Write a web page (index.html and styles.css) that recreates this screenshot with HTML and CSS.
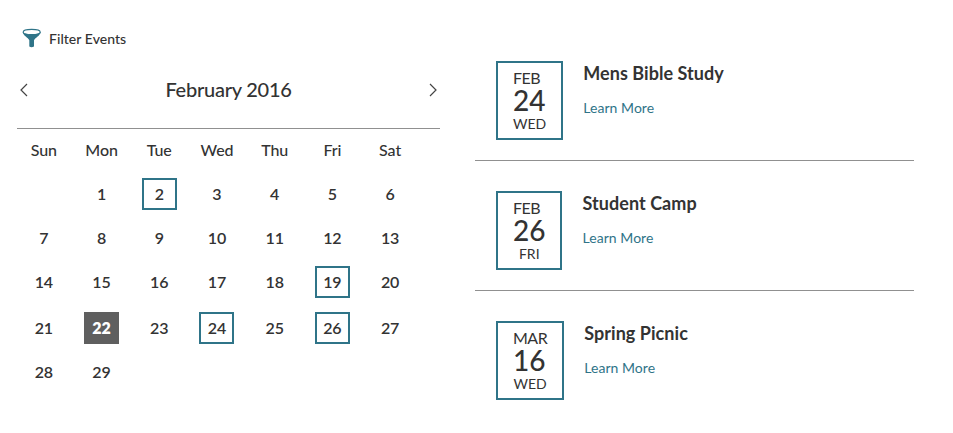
FILE: index.html
```html
<!DOCTYPE html>
<html lang="en">
<head>
  <meta charset="UTF-8">
  <title>Events Calendar</title>
  <link rel="stylesheet" href="styles.css">
</head>
<body>

  <div class="calendar">
    <div class="filter">
      <svg width="20" height="20" viewBox="0 0 20 20">
        <path d="M.6 4 C1.5 8 6 9.5 7.3 12.2 V18.6 Q9.5 19.8 12 18.6 V12.2 C13.5 9.5 17.9 8 18.8 4 Z" fill="#2f7488"/>
        <ellipse cx="9.7" cy="4" rx="8.5" ry="2.6" fill="#fff" stroke="#2f7488" stroke-width="1.1"/>
      </svg>
      <span>Filter Events</span>
    </div>

    <div class="month">
      <svg width="8" height="14" viewBox="0 0 8 14"><path d="M7 1 L1 7 L7 13"/></svg>
      <h2>February 2016</h2>
      <svg width="8" height="14" viewBox="0 0 8 14"><path d="M1 1 L7 7 L1 13"/></svg>
    </div>

    <table class="days">
      <tr><th>Sun</th><th>Mon</th><th>Tue</th><th>Wed</th><th>Thu</th><th>Fri</th><th>Sat</th></tr>
      <tr><td></td><td>1</td><td><span class="event">2</span></td><td>3</td><td>4</td><td>5</td><td>6</td></tr>
      <tr><td>7</td><td>8</td><td>9</td><td>10</td><td>11</td><td>12</td><td>13</td></tr>
      <tr><td>14</td><td>15</td><td>16</td><td>17</td><td>18</td><td><span class="event">19</span></td><td>20</td></tr>
      <tr class="current"><td>21</td><td><span class="today">22</span></td><td>23</td><td><span class="event">24</span></td><td>25</td><td><span class="event">26</span></td><td>27</td></tr>
      <tr><td>28</td><td>29</td><td></td><td></td><td></td><td></td><td></td></tr>
    </table>
  </div>

  <div class="list">
    <div class="item">
      <div class="date">
        <span class="mon">FEB</span>
        <span class="num">24</span>
        <span class="day">WED</span>
      </div>
      <div class="info">
        <h3>Mens Bible Study</h3>
        <a>Learn More</a>
      </div>
    </div>
    <div class="item">
      <div class="date">
        <span class="mon">FEB</span>
        <span class="num">26</span>
        <span class="day">FRI</span>
      </div>
      <div class="info">
        <h3>Student Camp</h3>
        <a>Learn More</a>
      </div>
    </div>
    <div class="item">
      <div class="date">
        <span class="mon">MAR</span>
        <span class="num">16</span>
        <span class="day">WED</span>
      </div>
      <div class="info">
        <h3>Spring Picnic</h3>
        <a>Learn More</a>
      </div>
    </div>
  </div>

</body>
</html>
```
FILE: styles.css
```css
body {
  margin: 0;
  display: flex;
  font-family: Lato, sans-serif;
  color: #333;
  background: #fff;
}
.calendar {
  width: 423px;
  margin-left: 17px;
  padding-top: 27px;
}
.filter {
  display: flex;
  height: 22px;
  align-items: center;
  padding-left: 5px;
  gap: 7px;
  font-size: 14px;
  font-weight: 500;
  letter-spacing: 0.05px;
}
.month {
  display: flex;
  justify-content: space-between;
  align-items: center;
  height: 77px;
  padding: 2px 3px 0;
  border-bottom: 1px solid #909090;
}
.month svg {
  fill: none;
  stroke: #444;
  stroke-width: 1.2;
}
.month h2 {
  margin: 0;
  padding-bottom: 2px;
  font-size: 20px;
  font-weight: 500;
  letter-spacing: -0.25px;
}
.days {
  width: 404px;
  margin-left: -2px;
  margin-top: -1px;
  border-collapse: collapse;
  table-layout: fixed;
  font-size: 16px;
}
.days th, .days td {
  height: 42px;
  padding: 0 0 2px;
  text-align: center;
  font-weight: 600;
  letter-spacing: -0.1px;
}
.days th {
  font-weight: 500;
}
.days .current td {
  height: 46px;
  padding: 1px 0 0;
  box-sizing: border-box;
}
.event, .today {
  display: block;
  box-sizing: border-box;
  width: 35px;
  height: 32px;
  margin: 1px auto -1px;
  line-height: 28px;
  border: 2px solid #2f7488;
}
.current .event, .current .today {
  margin: 0 auto;
}
.today {
  color: #fff;
  background: #5f5f5f;
  border-color: #5f5f5f;
  font-weight: 800;
}
.list {
  width: 439px;
  margin-left: 35px;
  padding-top: 31px;
}
.item {
  display: flex;
  box-sizing: border-box;
  height: 130px;
  padding: 30px 0 0 21px;
  gap: 20px;
  border-bottom: 1px solid #909090;
}
.item:last-child {
  border-bottom: none;
}
.date {
  display: flex;
  flex-direction: column;
  box-sizing: border-box;
  height: 79px;
  padding: 5px 15px;
  border: 2px solid #2f7488;
}
.mon {
  font-size: 16px;
  line-height: 20px;
  letter-spacing: -0.5px;
}
.num {
  font-size: 28px;
  line-height: 25px;
  margin-bottom: 1px;
  font-weight: 500;
}
.day {
  font-size: 14px;
  line-height: 20px;
  text-align: center;
}
.info h3 {
  margin: 0;
  font-size: 18px;
  line-height: 24px;
  letter-spacing: 0.05px;
}
.info a {
  display: block;
  margin-top: 13px;
  font-size: 14px;
  line-height: 20px;
  letter-spacing: 0.05px;
  color: #2f7488;
}
```
